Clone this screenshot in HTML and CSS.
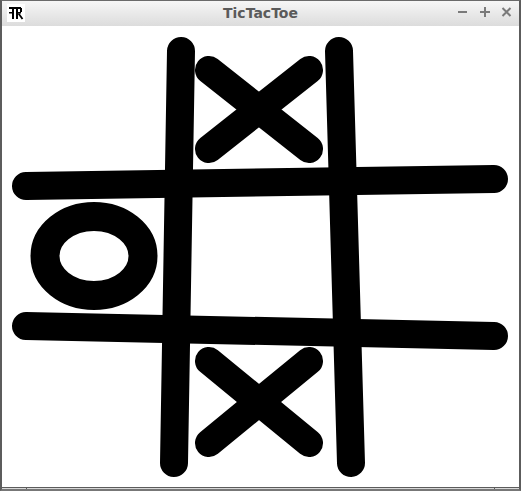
FILE: index.html
```html
<!DOCTYPE html>
<html>
<head>
<meta charset="utf-8">
<title>TicTacToe</title>
<link rel="stylesheet" href="styles.css">
</head>
<body>
<div class="window">
  <div class="titlebar">
    <div class="app-icon">
      <svg width="18" height="18" viewBox="0 0 18 18">
        <rect x="0" y="0" width="18" height="18" fill="#fff"/>
        <rect x="2" y="3" width="12" height="2" fill="#000"/>
        <rect x="5" y="3" width="2" height="12" fill="#000"/>
        <rect x="2" y="8" width="4" height="1.5" fill="#000"/>
        <rect x="9" y="3" width="2" height="12" fill="#000"/>
        <rect x="13" y="4" width="2" height="4" fill="#000"/>
        <rect x="9" y="8" width="5" height="1.5" fill="#000"/>
        <path d="M11.5 9.5 L15.5 15" stroke="#000" stroke-width="1.8" fill="none"/>
      </svg>
    </div>
    <div class="title">TicTacToe</div>
    <div class="controls">
      <svg width="60" height="26" viewBox="0 0 60 26">
        <g stroke="#7a7a7a" stroke-width="2" fill="none">
          <path d="M5 12 H14"/>
          <path d="M27 12 H37 M32 7 V17"/>
          <path d="M49.5 8 L57.5 16 M57.5 8 L49.5 16"/>
        </g>
      </svg>
    </div>
  </div>
  <div class="canvas">
    <svg class="board" width="517" height="461" viewBox="2 26 517 461">
      <g stroke="#000" stroke-width="28" stroke-linecap="round" fill="none">
        <line x1="181" y1="51" x2="174" y2="463"/>
        <line x1="339" y1="51" x2="351" y2="463"/>
        <line x1="26" y1="186" x2="494" y2="179"/>
        <line x1="26" y1="326" x2="494" y2="336"/>
        <line x1="209" y1="70" x2="309" y2="149"/>
        <line x1="309" y1="70" x2="209" y2="149"/>
        <line x1="209" y1="361" x2="309" y2="443"/>
        <line x1="309" y1="361" x2="209" y2="443"/>
        <ellipse cx="94" cy="256" rx="49" ry="39.5" stroke-width="29"/>
      </g>
    </svg>
  </div>
  <div class="bottom">
    <div class="grip grip-left"></div>
    <div class="grip grip-mid"></div>
    <div class="grip grip-right"></div>
  </div>
</div>
</body>
</html>
```
FILE: styles.css
```css
html, body {
  margin: 0;
  padding: 0;
  background: #ffffff;
}
.window {
  width: 521px;
  height: 491px;
  box-sizing: border-box;
  display: flex;
  flex-direction: column;
  overflow: hidden;
}
.titlebar {
  height: 26px;
  flex: none;
  box-sizing: border-box;
  border-top: 1px solid #6a6a6a;
  border-left: 2px solid #5c5c5c;
  border-right: 2px solid #5c5c5c;
  background: linear-gradient(#f6f6f6, #dcdcdc);
  display: flex;
  align-items: center;
}
.app-icon {
  width: 18px;
  height: 18px;
  margin-left: 5px;
  margin-top: -2px;
  display: flex;
}
.title {
  flex: 1;
  text-align: center;
  font-family: "DejaVu Sans", sans-serif;
  font-weight: bold;
  font-size: 14px;
  color: #5a5a5a;
  margin-top: -2px;
  padding-left: 43px;
}
.controls {
  width: 60px;
  height: 26px;
  margin-top: -2px;
  margin-right: 6px;
  display: flex;
}
.canvas {
  flex: 1;
  border-left: 2px solid #5c5c5c;
  border-right: 2px solid #5c5c5c;
  background: #ffffff;
  display: flex;
  overflow: hidden;
}
.board {
  display: block;
}
.bottom {
  height: 4px;
  flex: none;
  box-sizing: border-box;
  border-top: 1px solid #5c5c5c;
  border-bottom: 2px solid #777777;
  border-left: 2px solid #5c5c5c;
  border-right: 2px solid #5c5c5c;
  background: #d8d8d8;
  display: flex;
}
.grip {
  height: 100%;
}
.grip-left {
  width: 24px;
  border-right: 1px solid #5c5c5c;
}
.grip-mid {
  flex: 1;
  border-right: 1px solid #5c5c5c;
}
.grip-right {
  width: 24px;
}
```
